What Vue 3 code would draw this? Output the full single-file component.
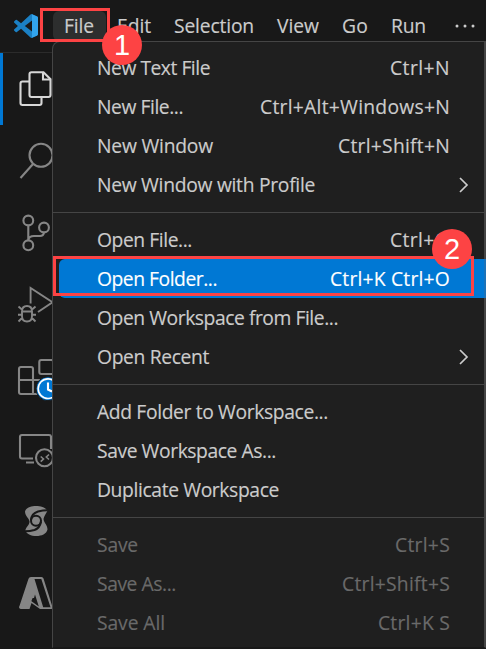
<script setup>
const menubar = [
  { text: 'File', w: 29, active: true },
  { text: 'Edit', w: 33 },
  { text: 'Selection', w: 79 },
  { text: 'View', w: 41 },
  { text: 'Go', w: 25 },
  { text: 'Run', w: 34 },
]

const groups = [
  [
    { label: 'New Text File', w: 112, keys: 'Ctrl+N', kw: 59 },
    { label: 'New File...', w: 85, keys: 'Ctrl+Alt+Windows+N', kw: 189 },
    { label: 'New Window', w: 115, keys: 'Ctrl+Shift+N', kw: 111 },
    { label: 'New Window with Profile', w: 217, submenu: true },
  ],
  [
    { label: 'Open File...', w: 94, keys: 'Ctrl+O', kw: 59 },
    { label: 'Open Folder...', w: 119, keys: 'Ctrl+K Ctrl+O', kw: 119, selected: true },
    { label: 'Open Workspace from File...', w: 240 },
    { label: 'Open Recent', w: 111, submenu: true },
  ],
  [
    { label: 'Add Folder to Workspace...', w: 230 },
    { label: 'Save Workspace As...', w: 178 },
    { label: 'Duplicate Workspace', w: 181 },
  ],
  [
    { label: 'Save', w: 40, keys: 'Ctrl+S', kw: 54, disabled: true },
    { label: 'Save As...', w: 78, keys: 'Ctrl+Shift+S', kw: 107, disabled: true },
    { label: 'Save All', w: 67, keys: 'Ctrl+K S', kw: 71, disabled: true },
  ],
]

// Tracks a label so that it fills its nominal width.
const vFit = {
  mounted(el, { value }) {
    const natural = el.getBoundingClientRect().width
    el.style.letterSpacing = (value + 1 - natural) / el.textContent.length + 'px'
  },
}
</script>

<template>
  <div class="window">
    <header class="titlebar">
      <svg class="logo" viewBox="0 0 24 24">
        <path fill="#1b80c4" d="M23.15 2.587L18.21.21a1.494 1.494 0 0 0-1.705.29l-9.46 8.63-4.12-3.128a.999.999 0 0 0-1.276.057L.327 7.261A1 1 0 0 0 .326 8.74L3.899 12 .326 15.26a1 1 0 0 0 .001 1.479L1.65 17.94a.999.999 0 0 0 1.276.057l4.12-3.128 9.46 8.63a1.492 1.492 0 0 0 1.704.29l4.942-2.377A1.5 1.5 0 0 0 24 20.06V3.939a1.5 1.5 0 0 0-.85-1.352zm-5.146 14.861L10.826 12l7.178-5.448v10.896z" />
        <path fill="#32a5ee" d="M18 .2l5.15 2.387A1.5 1.5 0 0 1 24 3.94v16.12a1.5 1.5 0 0 1-.85 1.35L18 23.8z" />
      </svg>
      <nav class="menubar">
        <div v-for="m in menubar" :key="m.text" class="top-item" :class="{ active: m.active }">
          <span v-fit="m.w" class="text">{{ m.text }}</span>
        </div>
      </nav>
      <svg class="more" viewBox="0 0 20 4">
        <circle cx="2" cy="2" r="1.5" /><circle cx="10" cy="2" r="1.5" /><circle cx="18" cy="2" r="1.5" />
      </svg>
    </header>

    <aside class="activity">
      <div class="slot current">
        <svg viewBox="0 0 72 72">
          <path d="M29.5 28.5H22.5q-2 0-2 2V50q0 2 2 2H39.5q2 0 2-2V44.5M31.5 19.3H43.5L50.5 26.3V42q0 2-2 2H31.5q-2 0-2-2V21.3q0-2 2-2z" />
          <path d="M43 19.5V26.5H50.5" />
        </svg>
      </div>
      <div class="slot">
        <svg viewBox="0 0 72 72">
          <circle cx="41" cy="30.3" r="11.5" /><path d="M33 39L20.5 53" />
        </svg>
      </div>
      <div class="slot">
        <svg viewBox="0 0 72 72">
          <circle cx="28.3" cy="23.5" r="4.9" /><circle cx="44" cy="30.5" r="4.9" />
          <circle cx="28.3" cy="48.3" r="4.9" />
          <path d="M28.3 28.5V43.5M44 35.4Q43.5 39 40 39H34Q29 39 28.3 43" />
        </svg>
      </div>
      <div class="slot">
        <svg viewBox="0 0 72 72" class="fine">
          <path d="M30.6 34.500V19L52.500 33.200L38 43" />
          <path d="M22 42.500H32M22 42.500V47q0 5.500 5 5.500t5-5.500V42.500q0-5.500-5-5.500t-5 5.500M22.500 41L18.500 37.500M31.500 41L35.500 37.500M18 45.700H22M32 45.700H36M22.500 48.500L18.500 52.500M31.500 48.500L35.500 52.500" />
        </svg>
      </div>
      <div class="slot">
        <svg viewBox="0 0 72 72">
          <path d="M21 26H31q2 0 2 2V53H21q-2 0-2-2V28q0-2 2-2zM19 39H44q2 0 2 2V53H33" />
          <rect x="39.3" y="19" width="14" height="14" rx="2" />
          <circle class="badge-edge" cx="48" cy="47.7" r="12" />
          <circle class="badge-face" cx="48" cy="47.7" r="9.8" />
          <path class="hands" d="M48 41.500V48.500L52 50.500" />
        </svg>
      </div>
      <div class="slot">
        <svg viewBox="0 0 72 72">
          <path d="M34 49.500H26M33 45.500H22q-2 0-2-2V24q0-2 2-2H49q2 0 2 2V36" />
          <circle cx="44.500" cy="44.700" r="8.500" />
          <path class="thin" d="M40.700 43.500L43.500 46L40.700 48.700M49 41.500L46.300 44L49 46.500" />
        </svg>
      </div>
      <div class="slot">
        <svg viewBox="0 0 72 72">
          <path class="solid" d="M25 26.500C26 22.500 31 21 36 21C41 21 46 22.500 47.300 26C46 29 44 31 43.500 34C44 38 47.500 40 47.500 44.500C46.500 49 41.500 51 36.500 51C31 51 26.500 49 25.300 45.500C26 42 29.500 40 29.500 36.500C29 33 25 31 25 26.500z" />
          <circle class="cut" cx="36" cy="35.700" r="5" />
          <path class="cut" d="M31 35Q31.500 28.500 38 26.500Q43 25.300 47.500 25.300M41 36.500Q40 43 34.500 45Q30 46.300 25 46.300" />
        </svg>
      </div>
      <div class="slot">
        <svg viewBox="0 0 72 72">
          <path class="solid" d="M31 20H41.500Q43 20 43.500 21.500L52.500 50Q53 52 51 52H40L31.500 46L29.500 52H21Q18.500 52 19.300 49.500L28.500 21.800Q29 20 31 20z" />
          <path class="solid-cut" d="M34.500 22H41.300L50.500 50.200H43.200zM27 41H34L35 37.500L38.800 49.500z" />
          <path class="solid" d="M19.500 50L28 32L33 40L29 50Q28 52 26 52H21z" />
        </svg>
      </div>
    </aside>

    <div class="menu">
      <section v-for="(g, i) in groups" :key="i" class="group">
        <div v-for="r in g" :key="r.label" class="row" :class="{ selected: r.selected, disabled: r.disabled }">
          <span v-fit="r.w" class="text">{{ r.label }}</span>
          <span v-if="r.keys" v-fit="r.kw" class="text">{{ r.keys }}</span>
          <svg v-if="r.submenu" class="chevron" viewBox="0 0 10 16"><path d="M1 1L8 8L1 15" /></svg>
        </div>
      </section>
    </div>

    <div class="mark mark-file"></div>
    <div class="mark mark-folder"></div>
    <div class="step step-one">1</div>
    <div class="step step-two">2</div>
  </div>
</template>

<style>
body { background: #181818; overflow: hidden; }
</style>

<style scoped>
* { box-sizing: border-box; }
.window {
  position: relative;
  width: 486px;
  height: 649px;
  overflow: hidden;
  background: #181818;
  color: #cccccc;
  font-family: "Open Sans", "Noto Sans", sans-serif;
  font-size: 19.3px;
}
.text { white-space: pre; flex: none; -webkit-text-stroke: 0.15px currentColor; }
.titlebar {
  display: flex;
  align-items: center;
  height: 53px;
  border-bottom: 1px solid #2b2b2b;
  padding-left: 14px;
}
.logo { width: 24px; height: 24px; flex: none; }
.menubar { display: flex; margin-left: 15px; }
.top-item {
  display: flex;
  align-items: center;
  height: 30px;
  padding: 0 12px 2px 11px;
  border-radius: 6px;
}
.top-item.active { background: #2d2e2e; }
.more { width: 20px; height: 4px; margin-left: 17px; fill: #cccccc; flex: none; }
.activity { display: flex; flex-direction: column; width: 52px; }
.slot { width: 52px; height: 72px; overflow: hidden; color: #868686; }
.slot.current { border-left: 3px solid #0078d4; color: #d7d7d7; }
.slot svg {
  display: block;
  width: 72px;
  height: 72px;
  fill: none;
  stroke: currentColor;
  stroke-width: 2.1;
}
.slot.current svg { margin-left: -3px; }
.slot .fine { stroke-width: 1.9; }
.slot .thin { stroke-width: 1.6; }
.slot .badge-edge { fill: #0078d4; stroke: #181818; stroke-width: 1; }
.slot .badge-face { fill: #0078d4; stroke: #ffffff; stroke-width: 1.7; }
.slot .hands { stroke: #ffffff; }
.slot .solid { fill: currentColor; stroke: none; }
.slot .solid-cut { fill: #181818; stroke: none; }
.slot .cut { stroke: #181818; stroke-width: 2; }
.menu {
  position: absolute;
  left: 52px;
  top: 41px;
  width: 434px;
  height: 607px;
  padding-top: 6px;
  background: #1f1f1f;
  border: 1px solid #454545;
  border-right-width: 2px;
  border-bottom-color: #181818;
  border-top-left-radius: 8px;
}
.group + .group { margin-top: 8px; border-top: 1px solid #454545; padding-top: 7px; }
.row {
  display: flex;
  align-items: center;
  justify-content: space-between;
  height: 39px;
  margin-left: 6px;
  padding: 0 34px 0 38px;
}
.row.selected {
  background: #0078d4;
  color: #ffffff;
  border-radius: 6px 0 0 6px;
  box-shadow: 2px 0 0 #1b72b8;
}
.row.disabled { color: #6a6a6a; }
.chevron {
  width: 10px;
  height: 16px;
  margin-right: -19px;
  fill: none;
  stroke: #cccccc;
  stroke-width: 1.7;
}
.mark { position: absolute; border: 3px solid #fd4344; }
.mark-file { left: 40px; top: 8px; width: 70px; height: 34px; }
.mark-folder { left: 53px; top: 256px; width: 421px; height: 40px; }
.step {
  position: absolute;
  display: flex;
  align-items: center;
  justify-content: center;
  width: 40px;
  height: 40px;
  border-radius: 50%;
  background: #fd4344;
  color: #ffffff;
  font-family: "Liberation Sans", sans-serif;
  font-size: 29px;
}
.step-one { left: 102px; top: 25px; }
.step-two { left: 432px; top: 229px; }
</style>
